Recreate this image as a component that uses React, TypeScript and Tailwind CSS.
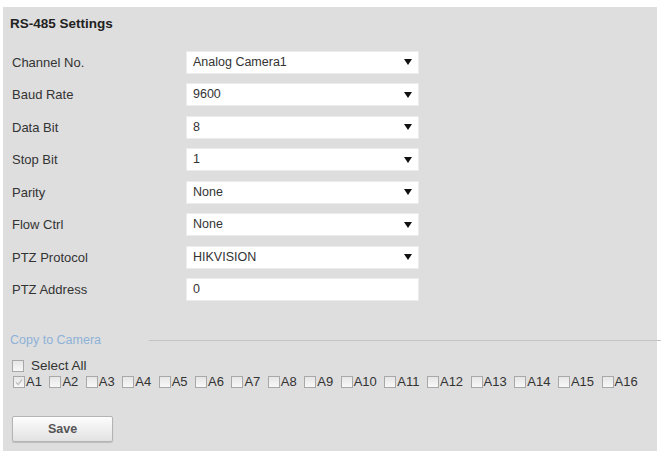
import React from "react";

const rows: { label: string; value: string; select: boolean }[] = [
  { label: "Channel No.", value: "Analog Camera1", select: true },
  { label: "Baud Rate", value: "9600", select: true },
  { label: "Data Bit", value: "8", select: true },
  { label: "Stop Bit", value: "1", select: true },
  { label: "Parity", value: "None", select: true },
  { label: "Flow Ctrl", value: "None", select: true },
  { label: "PTZ Protocol", value: "HIKVISION", select: true },
  { label: "PTZ Address", value: "0", select: false },
];

const cameras = Array.from({ length: 16 }, (_, i) => `A${i + 1}`);

function Box({ checked = false }: { checked?: boolean }) {
  return (
    <span className="relative inline-block w-[12px] h-[12px] shrink-0 border border-[#a8a8a8] bg-gradient-to-b from-[#e6e6e6] to-[#f8f8f8]">
      {checked && (
        <svg viewBox="0 0 12 12" className="absolute inset-0 w-full h-full">
          <path d="M2.5 6.5 L5 9 L9.5 3" fill="none" stroke="#b8b8b8" strokeWidth="1.4" />
        </svg>
      )}
    </span>
  );
}

export default function App() {
  return (
    <div
      className="w-[662px] h-[451px] bg-white pt-[7px] pl-[3px] pr-[5px] text-[#333]"
      style={{ fontFamily: '"Liberation Sans", Arial, sans-serif' }}
    >
      <div className="h-full bg-[#dedede] flex flex-col">
        <div className="pl-[7px] mt-[7px] h-[20px] leading-[20px] text-[13.5px] font-bold text-[#222]">
          RS-485 Settings
        </div>

        <div className="mt-[12px] flex flex-col">
          {rows.map((r) => (
            <div key={r.label} className="h-[32.5px] flex items-center">
              <div className="w-[183px] pl-[9px] text-[13px] text-[#333]">{r.label}</div>
              <div className="w-[233px] h-[23px] bg-white flex items-center pl-[6px] pr-[6px] border border-[#ececec]">
                <span className="flex-1 text-[12.5px] text-[#333]">{r.value}</span>
                {r.select && (
                  <svg width="8" height="6" viewBox="0 0 8 6">
                    <path d="M0 0 H8 L4 6 Z" fill="#111" />
                  </svg>
                )}
              </div>
            </div>
          ))}
        </div>

        <div className="mt-[26px] flex items-center h-[16px]">
          <span className="pl-[7px] text-[12.5px] text-[#8db2d8]">Copy to Camera</span>
          <div className="ml-[48px] flex-1 h-px bg-[#c4c4c4] mr-[-4px]" />
        </div>

        <div className="mt-[10px] pl-[9px] flex items-center gap-[7px] h-[16px]">
          <Box />
          <span className="text-[13.5px] text-[#333]">Select All</span>
        </div>

        <div className="pl-[10px] flex items-center h-[16px] gap-[7.5px]">
          {cameras.map((c, i) => (
            <div key={c} className="flex items-center gap-[1px]">
              <Box checked={i === 0} />
              <span className="text-[13px] text-[#333]">{c}</span>
            </div>
          ))}
        </div>

        <div className="mt-[26px] pl-[9px]">
          <button className="w-[101px] h-[26px] rounded-[2px] border border-[#b4b4b4] bg-gradient-to-b from-[#fdfdfd] to-[#e2e2e2] text-[12.5px] font-bold text-[#555] shadow-[0_1px_1px_rgba(0,0,0,0.15)]">
            Save
          </button>
        </div>
      </div>
    </div>
  );
}
